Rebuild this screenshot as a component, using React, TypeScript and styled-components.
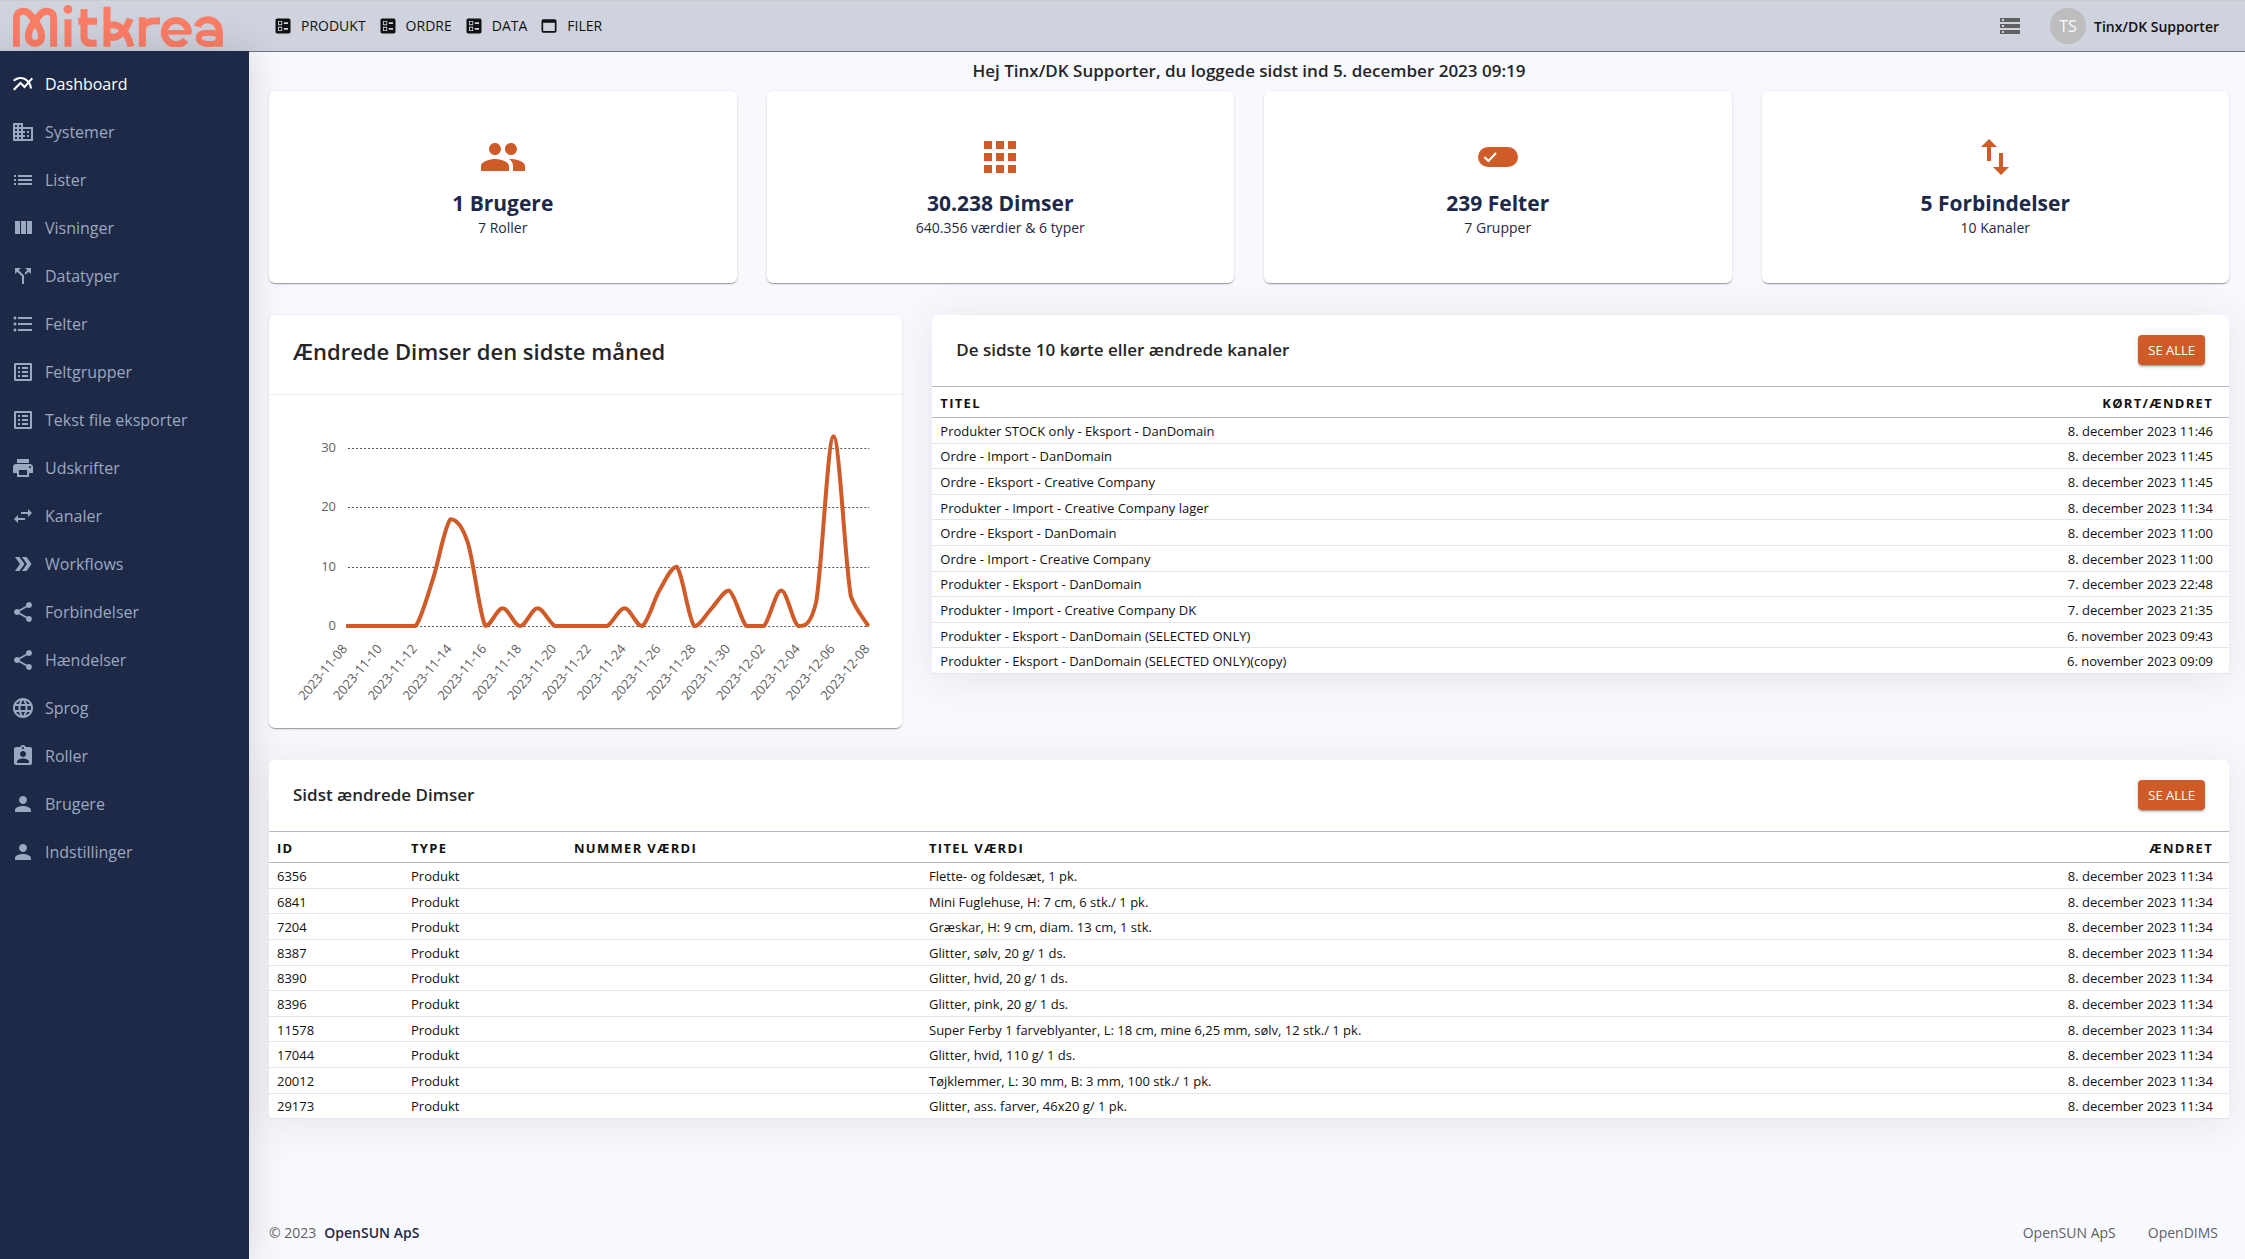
import React from "react";
import styled, { createGlobalStyle } from "styled-components";
import type { IconType } from "react-icons";
import {
  MdApps,
  MdAssignmentInd,
  MdBallot,
  MdCallSplit,
  MdDomain,
  MdDoubleArrow,
  MdFormatListBulleted,
  MdImportExport,
  MdLanguage,
  MdList,
  MdListAlt,
  MdMultilineChart,
  MdPeople,
  MdPerson,
  MdPrint,
  MdShare,
  MdStorage,
  MdSwapHoriz,
} from "react-icons/md";

const color = {
  navy: "#1e2947",
  orange: "#cf5b28",
  page: "#f8f9fe",
  bar: "#cfd3de",
  text: "#262626",
  muted: "#616161",
};

const GlobalStyle = createGlobalStyle`
  *, *::before, *::after { box-sizing: border-box; }
  body {
    margin: 0;
    background: ${color.page};
    color: ${color.text};
    font-family: "Open Sans", "Noto Sans", sans-serif;
    font-size: 14px;
  }
  a { color: inherit; text-decoration: none; }
  h1, h2, p, ul { margin: 0; padding: 0; }
`;

const Page = styled.div`
  min-height: 100vh;
  display: grid;
  grid-template-columns: 249px minmax(0, 1fr);
  grid-template-rows: 52px 1fr;
`;

const TopBar = styled.header`
  grid-column: 1 / -1;
  display: flex;
  align-items: center;
  background: ${color.bar};
  border-top: 1px solid #cbcbcd;
  border-bottom: 1px solid #6f7280;
`;

const Brand = styled.a`
  width: 249px;
  padding-left: 13px;
  display: flex;
`;

const TopNav = styled.nav`
  flex: 1;
  display: flex;
  gap: 12px;
  padding-left: 24px;
`;

const TopLink = styled.a`
  display: flex;
  align-items: center;
  gap: 8px;
  color: #111;
  line-height: 20px;
`;

const UserArea = styled.div`
  display: flex;
  align-items: center;
  gap: 28px;
  padding-right: 26px;
`;

const IconButton = styled.button`
  display: flex;
  padding: 0;
  border: 0;
  background: none;
  color: ${color.muted};
`;

const UserButton = styled.button`
  display: flex;
  align-items: center;
  gap: 8px;
  padding: 0;
  border: 0;
  background: none;
  color: #111;
  font: inherit;
  font-weight: 600;
`;

const Avatar = styled.span`
  width: 36px;
  height: 36px;
  border-radius: 50%;
  display: grid;
  place-items: center;
  background: #bdbdbd;
  color: ${color.page};
  font-size: 16px;
  font-weight: 400;
`;

const Sidebar = styled.nav`
  margin-top: -1px;
  padding-top: 9px;
  background: ${color.navy};
  box-shadow: 0 0 35px rgba(60, 50, 50, 0.2);
`;

const SideList = styled.ul`
  list-style: none;
`;

const SideLink = styled.a<{ $active?: boolean }>`
  height: 48px;
  padding-left: 11px;
  display: flex;
  align-items: center;
  gap: 10px;
  font-size: 16px;
  color: ${(p) => (p.$active ? "#ffffff" : "#9ba8bf")};
`;

const Content = styled.div`
  display: flex;
  flex-direction: column;
  padding: 0 16px 0 20px;
`;

const Main = styled.main`
  flex: 1;
`;

const Greeting = styled.h1`
  padding: 6px 0 7px;
  line-height: 26px;
  font-size: 17px;
  font-weight: 600;
  text-align: center;
`;

const Grid = styled.div`
  display: grid;
  grid-template-columns: repeat(12, minmax(0, 1fr));
  gap: 32px 30px;
  align-items: start;
`;

const Card = styled.section<{ $span: number }>`
  grid-column: span ${(p) => p.$span};
  border-radius: 6px;
  background: #fff;
  box-shadow: 0 2px 1px -1px rgba(0, 0, 0, 0.2), 0 1px 1px rgba(0, 0, 0, 0.14),
    0 1px 3px rgba(0, 0, 0, 0.12);
`;

const StatCard = styled(Card)`
  padding: 42px 16px 44px;
  display: flex;
  flex-direction: column;
  align-items: center;
  color: ${color.navy};

  svg {
    color: ${color.orange};
    margin-bottom: 8px;
  }
`;

const StatTitle = styled.h2`
  font-size: 21px;
  line-height: 28px;
  font-weight: 700;
`;

const StatNote = styled.p`
  line-height: 22px;
`;

const ChartTitle = styled.h2`
  padding: 20px 24px 27px;
  border-bottom: 1px solid #eeeef0;
  font-size: 22px;
  line-height: 32px;
  font-weight: 600;
`;

const ChartSvg = styled.svg`
  display: block;
  width: 100%;
  height: auto;
  fill: ${color.muted};
  font-size: 13px;
`;

const Panel = styled.section<{ $span: number }>`
  grid-column: span ${(p) => p.$span};
  border-radius: 6px;
  background: #fff;
  box-shadow: 0 4px 40px rgba(60, 50, 50, 0.1);
`;

const PanelHead = styled.div`
  height: 71px;
  padding: 0 24px 1px;
  display: flex;
  align-items: center;
  justify-content: space-between;
`;

const PanelTitle = styled.h2`
  font-size: 17px;
  line-height: 24px;
  font-weight: 600;
`;

const Button = styled.button`
  height: 30px;
  padding: 0 10px;
  border: 0;
  border-radius: 4px;
  background: ${color.orange};
  color: #fff;
  font: inherit;
  font-size: 13px;
  box-shadow: 0 3px 1px -2px rgba(0, 0, 0, 0.2), 0 2px 2px rgba(0, 0, 0, 0.14),
    0 1px 5px rgba(0, 0, 0, 0.12);
`;

const Table = styled.table`
  width: 100%;
  height: 288px;
  border-spacing: 0;
  table-layout: fixed;
  font-size: 13px;
  line-height: 18px;
  color: #111;
`;

const HeadCell = styled.th<{ $right?: boolean; $width?: number }>`
  width: ${(p) => (p.$width ? `${p.$width}px` : "auto")};
  height: 32px;
  padding: 2px ${(p) => (p.$right ? 16 : 8)}px 0 8px;
  border-top: 1px solid #b3b7c3;
  border-bottom: 1px solid #b3b7c3;
  text-align: ${(p) => (p.$right ? "right" : "left")};
  font-weight: 700;
  letter-spacing: 0.1em;
`;

const Cell = styled.td<{ $right?: boolean }>`
  padding: 3px ${(p) => (p.$right ? 16 : 8)}px 2px 8px;
  border-bottom: 1px solid #e2e5f0;
  text-align: ${(p) => (p.$right ? "right" : "left")};
`;

const Footer = styled.footer`
  display: flex;
  align-items: center;
  justify-content: space-between;
  padding: 16px 11px 16px 0;
  line-height: 20px;
  color: ${color.muted};
`;

const Copyright = styled.div`
  display: flex;
  gap: 8px;

  a {
    color: ${color.navy};
    font-weight: 600;
  }
`;

const FooterLinks = styled.div`
  display: flex;
  gap: 32px;
`;

function Logo() {
  return (
    <svg width="210" height="42" viewBox="39 15 630 126" role="img" aria-label="Mitkrea">
      <g fill="none" stroke="#fb7d66" strokeWidth="21">
        <path d="M49 140V58C49 28 78 28 92 46C108 68 125 86 125 108C125 138 85 138 85 108C85 86 102 68 118 46C132 28 161 28 161 58V140" />
        <path d="M204 58V140" />
        <path d="M252 27V108Q252 130 274 130H290M235 64H291" />
        <path d="M321 20V140M321 104C346 126 374 100 391 56M321 80C350 62 380 88 393 140" />
        <path d="M427 52V140M427 94C427 66 446 62 480 62" />
        <path d="M565 98A36 36 0 1 0 557 120" />
        <path d="M490 97H574" strokeWidth="14" />
        <path d="M592 80C602 50 658 50 658 98V140" />
        <path d="M657 114C657 132 640 132 626 132C608 132 596 126 596 114C596 102 608 98 626 98C640 98 657 98 657 114Z" strokeWidth="18" />
      </g>
      <circle cx="204" cy="28" r="13" fill="#fb7d66" />
    </svg>
  );
}

function WindowIcon({ size = 20 }: { size?: number }) {
  return (
    <svg width={size} height={size} viewBox="0 0 24 24" fill="currentColor" aria-hidden="true">
      <path d="M19 4H5a2 2 0 0 0-2 2v12a2 2 0 0 0 2 2h14a2 2 0 0 0 2-2V6a2 2 0 0 0-2-2zm0 14H5V8h14v10z" />
    </svg>
  );
}

function TogglePill({ size = 48 }: { size?: number }) {
  return (
    <svg width={size} height={size} viewBox="0 0 24 24" aria-hidden="true">
      <rect x="2" y="7" width="20" height="10" rx="5" fill="currentColor" />
      <path d="M5.2 12L7.2 14L11 10" fill="none" stroke="#fff" strokeWidth="1" />
    </svg>
  );
}

const topLinks: { label: string; Icon: React.ComponentType<{ size?: number }> }[] = [
  { label: "PRODUKT", Icon: MdBallot },
  { label: "ORDRE", Icon: MdBallot },
  { label: "DATA", Icon: MdBallot },
  { label: "FILER", Icon: WindowIcon },
];

function ColumnsIcon({ size = 24 }: { size?: number }) {
  return (
    <svg width={size} height={size} viewBox="0 0 24 24" fill="currentColor" aria-hidden="true">
      <path d="M10 18h5V5h-5v13zm-6 0h5V5H4v13zM16 5v13h5V5h-5z" />
    </svg>
  );
}

const sideLinks: { label: string; Icon: IconType | typeof ColumnsIcon }[] = [
  { label: "Dashboard", Icon: MdMultilineChart },
  { label: "Systemer", Icon: MdDomain },
  { label: "Lister", Icon: MdList },
  { label: "Visninger", Icon: ColumnsIcon },
  { label: "Datatyper", Icon: MdCallSplit },
  { label: "Felter", Icon: MdFormatListBulleted },
  { label: "Feltgrupper", Icon: MdListAlt },
  { label: "Tekst file eksporter", Icon: MdListAlt },
  { label: "Udskrifter", Icon: MdPrint },
  { label: "Kanaler", Icon: MdSwapHoriz },
  { label: "Workflows", Icon: MdDoubleArrow },
  { label: "Forbindelser", Icon: MdShare },
  { label: "Hændelser", Icon: MdShare },
  { label: "Sprog", Icon: MdLanguage },
  { label: "Roller", Icon: MdAssignmentInd },
  { label: "Brugere", Icon: MdPerson },
  { label: "Indstillinger", Icon: MdPerson },
];

const stats = [
  { title: "1 Brugere", note: "7 Roller", Icon: MdPeople },
  { title: "30.238 Dimser", note: "640.356 værdier & 6 typer", Icon: MdApps },
  { title: "239 Felter", note: "7 Grupper", Icon: TogglePill },
  { title: "5 Forbindelser", note: "10 Kanaler", Icon: MdImportExport },
];

const channels = [
  ["Produkter STOCK only - Eksport - DanDomain", "8. december 2023 11:46"],
  ["Ordre - Import - DanDomain", "8. december 2023 11:45"],
  ["Ordre - Eksport - Creative Company", "8. december 2023 11:45"],
  ["Produkter - Import - Creative Company lager", "8. december 2023 11:34"],
  ["Ordre - Eksport - DanDomain", "8. december 2023 11:00"],
  ["Ordre - Import - Creative Company", "8. december 2023 11:00"],
  ["Produkter - Eksport - DanDomain", "7. december 2023 22:48"],
  ["Produkter - Import - Creative Company DK", "7. december 2023 21:35"],
  ["Produkter - Eksport - DanDomain (SELECTED ONLY)", "6. november 2023 09:43"],
  ["Produkter - Eksport - DanDomain (SELECTED ONLY)(copy)", "6. november 2023 09:09"],
];

const items = [
  ["6356", "Flette- og foldesæt, 1 pk."],
  ["6841", "Mini Fuglehuse, H: 7 cm, 6 stk./ 1 pk."],
  ["7204", "Græskar, H: 9 cm, diam. 13 cm, 1 stk."],
  ["8387", "Glitter, sølv, 20 g/ 1 ds."],
  ["8390", "Glitter, hvid, 20 g/ 1 ds."],
  ["8396", "Glitter, pink, 20 g/ 1 ds."],
  ["11578", "Super Ferby 1 farveblyanter, L: 18 cm, mine 6,25 mm, sølv, 12 stk./ 1 pk."],
  ["17044", "Glitter, hvid, 110 g/ 1 ds."],
  ["20012", "Tøjklemmer, L: 30 mm, B: 3 mm, 100 stk./ 1 pk."],
  ["29173", "Glitter, ass. farver, 46x20 g/ 1 pk."],
];

const daily = [
  0, 0, 0, 0, 0, 8, 18, 14, 0, 3, 0, 3, 0, 0, 0, 0, 3, 0, 6, 10, 0, 3, 6, 0, 0, 6, 0, 4, 32, 5, 0,
];

const plot = { left: 77, right: 599, zero: 231, height: 178, top: 30 };
const stepX = (plot.right - plot.left) / (daily.length - 1);
const toX = (i: number) => plot.left + i * stepX;
const toY = (v: number) => plot.zero - (v * plot.height) / plot.top;

// Cubic curve through the points; control values never leave the range of their segment.
function curve(values: number[]) {
  const end = values.length - 1;
  const slope = (i: number) => (i === 0 || i === end ? 0 : (values[i + 1] - values[i - 1]) / 2);
  let d = `M${toX(0)} ${toY(values[0])}`;
  for (let i = 0; i < end; i++) {
    const a = values[i];
    const b = values[i + 1];
    const clamp = (v: number) => Math.min(Math.max(v, Math.min(a, b)), Math.max(a, b));
    const isLast = i === end - 1;
    const c1 = isLast ? a + (b - a) / 2 : clamp(a + slope(i) / 3);
    const c2 = isLast ? b + (a - b) / 3 : clamp(b - slope(i + 1) / 3);
    d += `C${toX(i + 1 / 3)} ${toY(c1)} ${toX(i + 2 / 3)} ${toY(c2)} ${toX(i + 1)} ${toY(b)}`;
  }
  return d;
}

function dayLabel(i: number) {
  return new Date(Date.UTC(2023, 10, 8 + i)).toISOString().slice(0, 10);
}

function Chart() {
  return (
    <ChartSvg viewBox="0 0 633 333" role="img" aria-label="Ændrede Dimser den sidste måned">
      {[0, 10, 20, 30].map((v) => (
        <g key={v}>
          <line
            x1={79}
            x2={600}
            y1={Math.round(toY(v)) + 0.5}
            y2={Math.round(toY(v)) + 0.5}
            stroke="#555"
            strokeDasharray="2 2"
          />
          <text x={67} y={Math.round(toY(v)) + 4} textAnchor="end">
            {v}
          </text>
        </g>
      ))}
      <path d={curve(daily)} fill="none" stroke={color.orange} strokeWidth="4" strokeLinejoin="bevel" />
      {daily.map((_, i) =>
        i % 2 === 0 ? (
          <text key={i} textAnchor="end" transform={`translate(${toX(i) + 2} 254) rotate(-50)`}>
            {dayLabel(i)}
          </text>
        ) : null
      )}
    </ChartSvg>
  );
}

export default function App() {
  return (
    <>
      <GlobalStyle />
      <Page>
        <TopBar>
          <Brand href="#">
            <Logo />
          </Brand>
          <TopNav>
            {topLinks.map(({ label, Icon }) => (
              <TopLink href="#" key={label}>
                <Icon size={20} />
                {label}
              </TopLink>
            ))}
          </TopNav>
          <UserArea>
            <IconButton type="button" aria-label="Opgaver">
              <MdStorage size={24} />
            </IconButton>
            <UserButton type="button">
              <Avatar>TS</Avatar>
              Tinx/DK Supporter
            </UserButton>
          </UserArea>
        </TopBar>

        <Sidebar>
          <SideList>
            {sideLinks.map(({ label, Icon }, i) => (
              <li key={label}>
                <SideLink href="#" $active={i === 0}>
                  <Icon size={24} />
                  {label}
                </SideLink>
              </li>
            ))}
          </SideList>
        </Sidebar>

        <Content>
          <Main>
            <Greeting>Hej Tinx/DK Supporter, du loggede sidst ind 5. december 2023 09:19</Greeting>
            <Grid>
              {stats.map(({ title, note, Icon }) => (
                <StatCard $span={3} key={title}>
                  <Icon size={48} />
                  <StatTitle>{title}</StatTitle>
                  <StatNote>{note}</StatNote>
                </StatCard>
              ))}

              <Card $span={4}>
                <ChartTitle>Ændrede Dimser den sidste måned</ChartTitle>
                <Chart />
              </Card>

              <Panel $span={8}>
                <PanelHead>
                  <PanelTitle>De sidste 10 kørte eller ændrede kanaler</PanelTitle>
                  <Button type="button">SE ALLE</Button>
                </PanelHead>
                <Table>
                  <thead>
                    <tr>
                      <HeadCell>TITEL</HeadCell>
                      <HeadCell $right>KØRT/ÆNDRET</HeadCell>
                    </tr>
                  </thead>
                  <tbody>
                    {channels.map(([title, changed]) => (
                      <tr key={title}>
                        <Cell>{title}</Cell>
                        <Cell $right>{changed}</Cell>
                      </tr>
                    ))}
                  </tbody>
                </Table>
              </Panel>

              <Panel $span={12}>
                <PanelHead>
                  <PanelTitle>Sidst ændrede Dimser</PanelTitle>
                  <Button type="button">SE ALLE</Button>
                </PanelHead>
                <Table>
                  <thead>
                    <tr>
                      <HeadCell $width={134}>ID</HeadCell>
                      <HeadCell $width={163}>TYPE</HeadCell>
                      <HeadCell $width={355}>NUMMER VÆRDI</HeadCell>
                      <HeadCell>TITEL VÆRDI</HeadCell>
                      <HeadCell $right>ÆNDRET</HeadCell>
                    </tr>
                  </thead>
                  <tbody>
                    {items.map(([id, title]) => (
                      <tr key={id}>
                        <Cell>{id}</Cell>
                        <Cell>Produkt</Cell>
                        <Cell />
                        <Cell>{title}</Cell>
                        <Cell $right>8. december 2023 11:34</Cell>
                      </tr>
                    ))}
                  </tbody>
                </Table>
              </Panel>
            </Grid>
          </Main>

          <Footer>
            <Copyright>
              <span>© 2023</span>
              <a href="#">OpenSUN ApS</a>
            </Copyright>
            <FooterLinks>
              <a href="#">OpenSUN ApS</a>
              <a href="#">OpenDIMS</a>
            </FooterLinks>
          </Footer>
        </Content>
      </Page>
    </>
  );
}
